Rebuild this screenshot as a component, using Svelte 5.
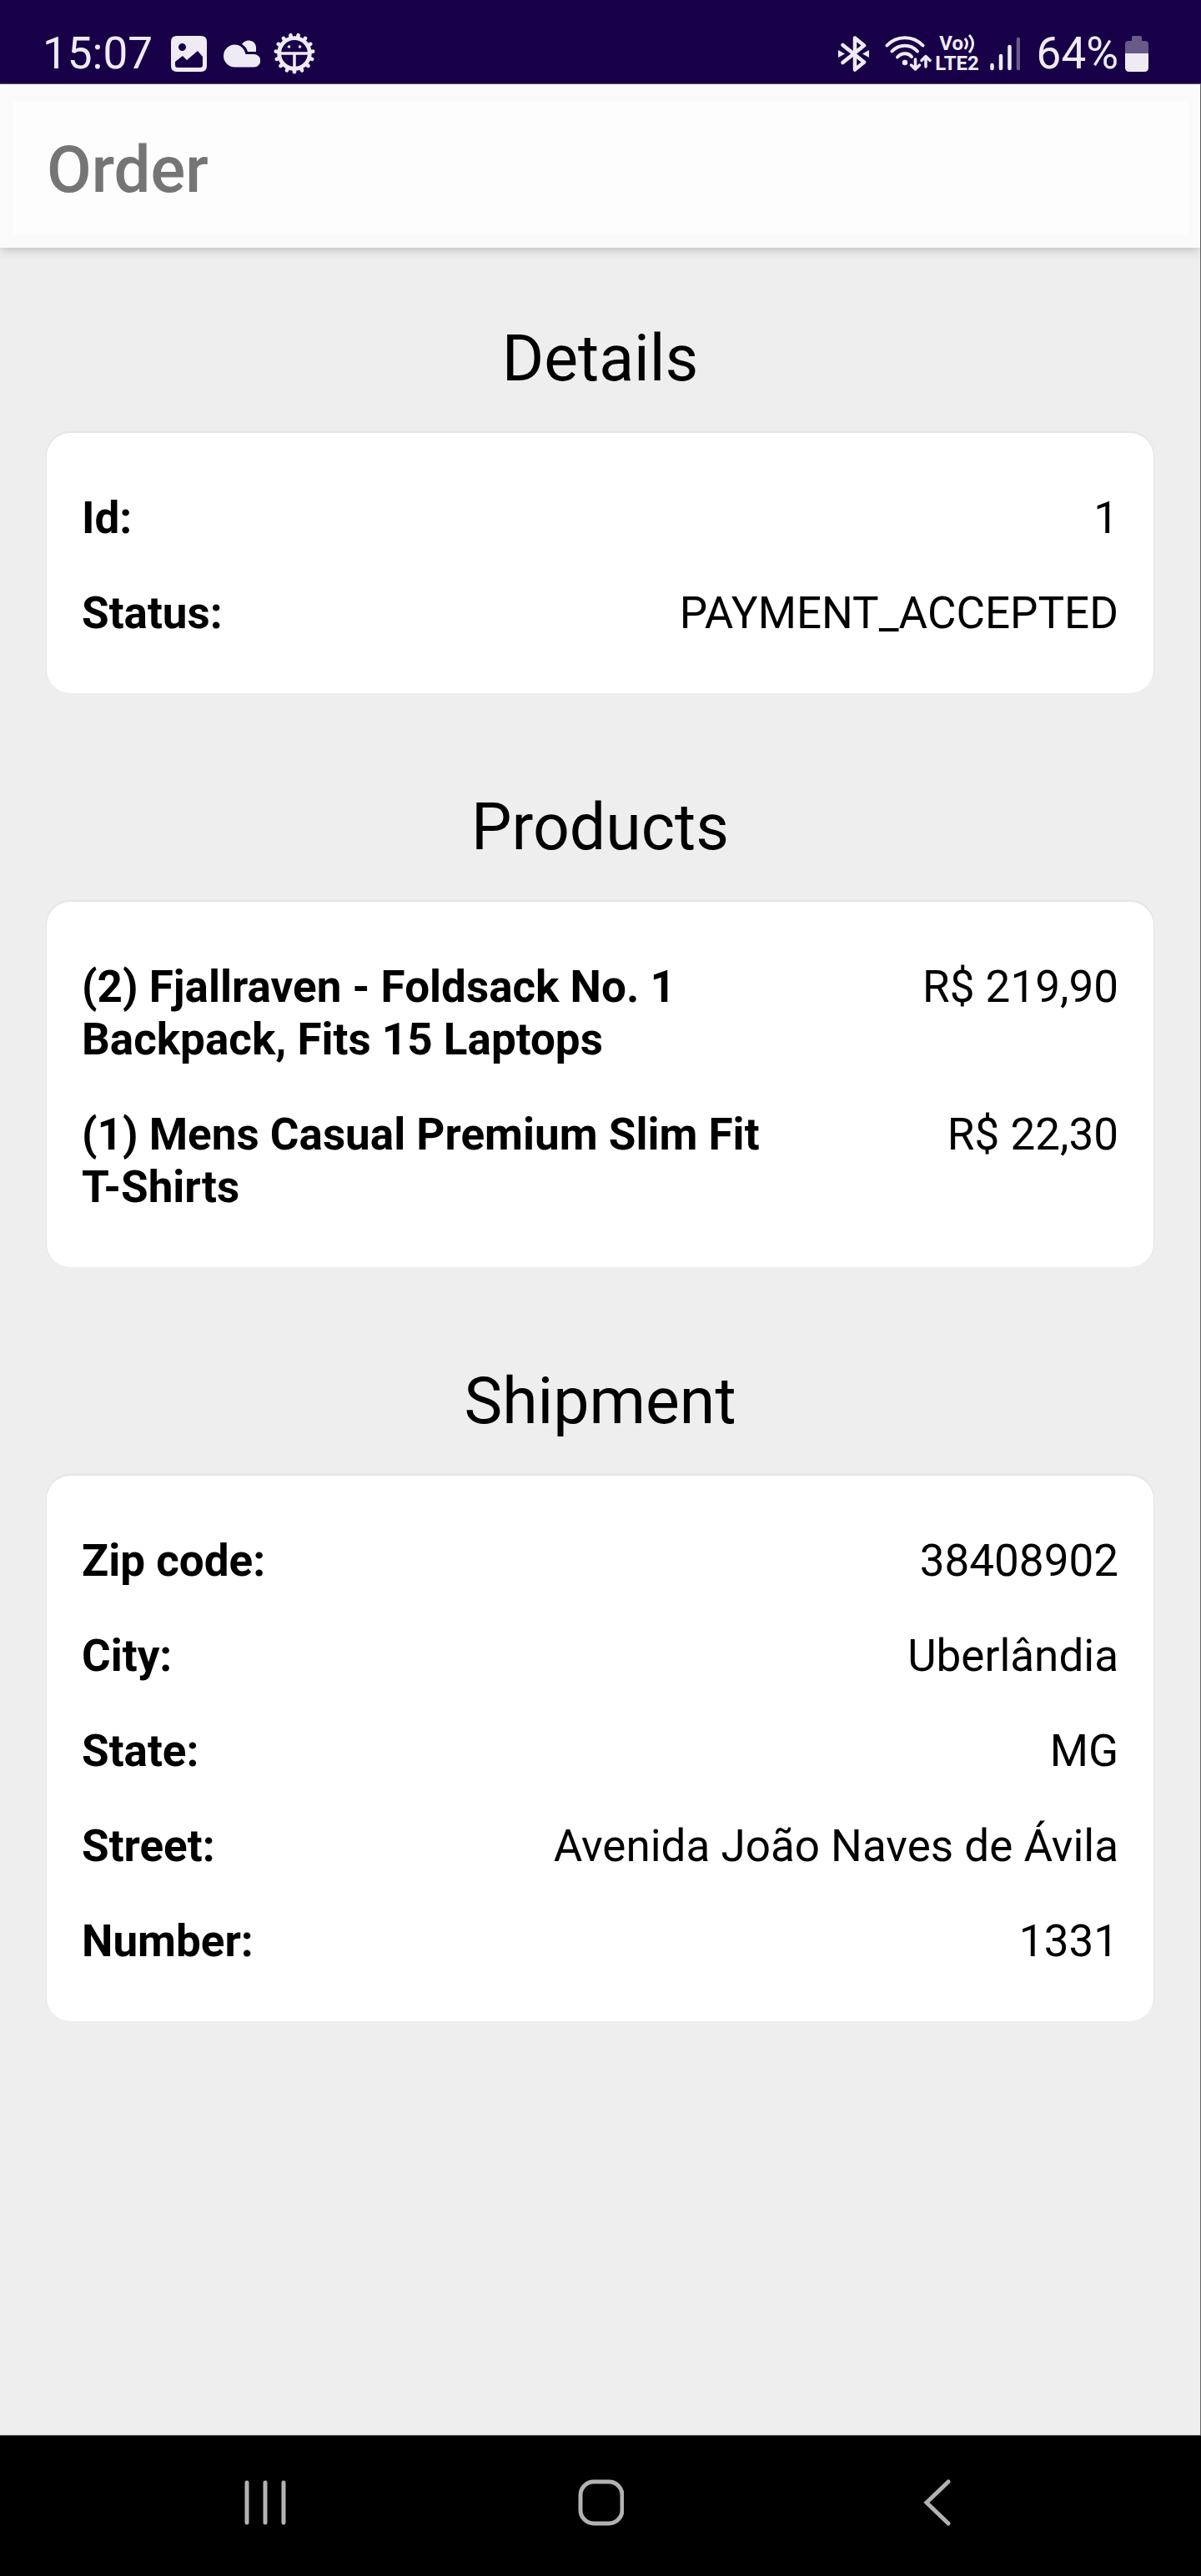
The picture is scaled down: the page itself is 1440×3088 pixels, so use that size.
<script>
  const sections = [
    {
      title: 'Details',
      rows: [
        ['Id:', '1'],
        ['Status:', 'PAYMENT_ACCEPTED'],
      ],
    },
    {
      title: 'Products',
      rows: [
        ['(2) Fjallraven - Foldsack No. 1 Backpack, Fits 15 Laptops', 'R$ 219,90'],
        ['(1) Mens Casual Premium Slim Fit T-Shirts', 'R$ 22,30'],
      ],
    },
    {
      title: 'Shipment',
      rows: [
        ['Zip code:', '38408902'],
        ['City:', 'Uberlândia'],
        ['State:', 'MG'],
        ['Street:', 'Avenida João Naves de Ávila'],
        ['Number:', '1331'],
      ],
    },
  ];

  // Angles of the fifteen rounded teeth around the cog's ring.
  const teeth = Array.from({ length: 15 }, (_, i) => (i * 360) / 15);
</script>

<div class="screen">
  <div class="status">
    <div class="group">
      <span class="clock">15:07</span>
      <svg class="picture" width="43" height="43" viewBox="0 0 43 43" aria-hidden="true">
        <path fill="currentColor" fill-rule="evenodd" d="M7 0H36Q43 0 43 7V36Q43 43 36 43H7Q0 43 0 36V7Q0 0 7 0ZM5 31V35Q5 38 8 38H35Q38 38 38 35V25L32 18L19 29L14 24ZM13.500 9A4.500 4.500 0 1 0 13.500 18A4.500 4.500 0 1 0 13.500 9Z" />
      </svg>
      <svg class="cloud" width="44" height="33" viewBox="0 0 44 33" aria-hidden="true">
        <path fill="currentColor" d="M13.500 5.500C20 5.500 25 10 26.500 17H36.500A7.700 7.700 0 0 1 36.500 32.500H13.500A13.500 13.500 0 0 1 13.500 5.500Z" />
        <path fill="currentColor" d="M22 5C24.500 1.500 28 0.500 30 0.500C35.500 0.500 39 4.500 39 9V14H29C28 10 25.500 7 22 5Z" />
      </svg>
      <svg class="cog" width="50" height="50" viewBox="-25 -25 50 50" aria-hidden="true">
        <circle r="18.300" fill="none" stroke="currentColor" stroke-width="4.800" />
        {#each teeth as angle}
          <path d="M0 19V22.300" transform="rotate({angle})" stroke="currentColor" stroke-width="4.600" stroke-linecap="round" />
        {/each}
        <path fill="none" stroke="currentColor" stroke-width="3.500" d="M-17 0H17M0 0V17" />
        <circle cx="-6.500" cy="-8" r="1.800" fill="currentColor" />
        <circle cx="6.500" cy="-8" r="1.800" fill="currentColor" />
      </svg>
    </div>
    <div class="group">
      <svg class="bluetooth" width="37" height="43" viewBox="0 0 37 43" aria-hidden="true">
        <path fill="none" stroke="currentColor" stroke-width="4.500" stroke-linecap="round" stroke-linejoin="round" d="M5.500 11L31 31.500L20 40.500V2.500L31 11.500L5.500 32" />
        <path fill="currentColor" d="M0 17L8 21.500L0 26ZM37 17L29 21.500L37 26Z" />
      </svg>
      <svg class="wifi" width="56" height="42" viewBox="0 0 56 42" aria-hidden="true">
        <g fill="none" stroke="currentColor" stroke-width="4" stroke-linecap="round">
          <path d="M2.500 11.500C14 -1 34 -1 45.500 11.500" />
          <path d="M8.500 18.500C17 9.500 31 9.500 39 18.500" />
          <path d="M15 25.500C20 20 28 20 32 25" />
        </g>
        <circle cx="24" cy="32" r="3.200" fill="currentColor" />
        <g fill="none" stroke="currentColor" stroke-width="3.500" stroke-linecap="round" stroke-linejoin="round">
          <path d="M36.500 28V40M31.500 35L36.500 40L41.500 35" />
          <path d="M49 37V24.500M44 29.500L49 24.500L54 29.500" />
        </g>
      </svg>
      <div class="volte">
        <span class="vo">Vo<svg width="14" height="24" viewBox="0 0 14 24" aria-hidden="true"><path fill="none" stroke="currentColor" stroke-width="3" d="M2 6Q7 12 2 19M7 2Q16 12 7 23" /></svg></span>
        <span>LTE2</span>
      </div>
      <svg class="signal" width="36" height="41" viewBox="0 0 36 41" aria-hidden="true">
        <g stroke="currentColor" stroke-width="4.500" stroke-linecap="round">
          <path d="M2.500 34V38M13 23V38M23.500 12V38" />
          <path d="M34 3V38" opacity=".38" />
        </g>
      </svg>
      <span class="clock">64%</span>
      <svg class="battery" width="28" height="43" viewBox="0 0 28 43" aria-hidden="true">
        <path fill="currentColor" opacity=".38" d="M10 0H18Q20 0 20 2V6H24Q28 6 28 10V21H0V10Q0 6 4 6H8V2Q8 0 10 0Z" />
        <path fill="currentColor" d="M0 21H28V38Q28 43 23 43H5Q0 43 0 38Z" />
      </svg>
    </div>
  </div>

  <div class="app">
    <header><h1>Order</h1></header>
    <main>
      {#each sections as section}
        <section>
          <h2>{section.title}</h2>
          <dl>
            {#each section.rows as [label, value]}
              <div class="row">
                <dt>{label}</dt>
                <dd>{value}</dd>
              </div>
            {/each}
          </dl>
        </section>
      {/each}
    </main>
  </div>

  <nav aria-label="System navigation">
    <button aria-label="Recent apps">
      <svg width="56" height="56" viewBox="0 0 56 56" aria-hidden="true">
        <path fill="none" stroke="currentColor" stroke-width="5" stroke-linecap="round" d="M8 4V52M30 4V52M52 4V52" />
      </svg>
    </button>
    <button aria-label="Home">
      <svg width="56" height="56" viewBox="0 0 56 56" aria-hidden="true">
        <rect x="4" y="3" width="50" height="50" rx="16" fill="none" stroke="currentColor" stroke-width="5" />
      </svg>
    </button>
    <button aria-label="Back">
      <svg width="56" height="56" viewBox="0 0 56 56" aria-hidden="true">
        <path fill="none" stroke="currentColor" stroke-width="5" stroke-linecap="round" d="M41 3L15 28L41 53" />
      </svg>
    </button>
  </nav>
</div>

<style>
  :global(body) {
    margin: 0;
  }

  .screen {
    display: flex;
    flex-direction: column;
    min-height: 100vh;
    background: #eeeeee;
    color: #000;
    font-family: Roboto, sans-serif;
  }

  .status {
    display: flex;
    justify-content: space-between;
    align-items: flex-end;
    padding: 39px 63px 11px 51px;
    background: #180048;
    border-bottom: 1px solid #645c78;
    color: #efebf5;
  }

  .status svg {
    display: block;
    flex: none;
  }

  .group {
    display: flex;
    align-items: center;
    height: 50px;
  }

  .clock {
    font-size: 53px;
    line-height: 50px;
  }

  .picture {
    margin-left: 22px;
  }

  .cloud {
    margin-left: 20px;
  }

  .cog {
    margin-left: 16px;
  }

  .wifi {
    margin-left: 19px;
  }

  .volte {
    display: flex;
    flex-direction: column;
    align-items: center;
    width: 54px;
    margin-left: 4px;
    font-size: 24px;
    font-weight: 700;
    line-height: 24px;
  }

  .vo {
    display: flex;
  }

  .signal {
    margin-left: 12px;
  }

  .signal + .clock {
    margin-left: 20px;
  }

  .battery {
    margin-left: 8px;
  }

  .app {
    flex: 1;
    border-right: 1px solid #666;
  }

  header {
    position: relative;
    padding: 20px 13px 16px 15px;
    background: #fafafa;
    box-shadow: 0 2px 12px rgba(0, 0, 0, 0.22);
  }

  h1 {
    margin: 0;
    padding: 37px 41px 32px;
    background: #fdfdfd;
    color: #757575;
    font-size: 78px;
    font-weight: 500;
    line-height: 91px;
  }

  main {
    padding: 3px 56px 28px;
  }

  section {
    padding: 85px 0 31px;
  }

  h2 {
    margin: 0 0 43px;
    font-size: 77px;
    font-weight: 400;
    line-height: 91px;
    text-align: center;
  }

  dl {
    margin: 0;
    padding: 42px;
    border-radius: 28px;
    background: #fff;
    box-shadow: 0 -1px 1px 1px #e4e4e4;
  }

  .row {
    display: flex;
    justify-content: space-between;
    gap: 28px;
    padding: 29px 0 22px;
    font-size: 53px;
    line-height: 63px;
  }

  dt {
    max-width: 70%;
    font-weight: 700;
  }

  dd {
    margin: 0;
    text-align: right;
  }

  nav {
    display: flex;
    justify-content: center;
    gap: 264px;
    height: 160px;
    padding-bottom: 8px;
    border-top: 1px solid #555;
    background: #000;
  }

  button {
    display: flex;
    align-items: center;
    justify-content: center;
    width: 140px;
    padding: 0;
    border: 0;
    background: none;
    color: #b2b2b2;
  }
</style>
